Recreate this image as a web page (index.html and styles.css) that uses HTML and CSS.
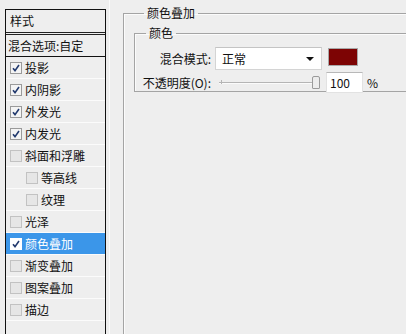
FILE: index.html
```html
<!DOCTYPE html>
<html lang="zh-CN">
    <head>
        <meta charset="UTF-8">
        <title>图层样式</title>
        <link rel="stylesheet" href="styles.css">
    </head>
    <body>
        <div class="dialog">
            <div class="styles-list">
                <div class="list-head">样式</div>
                <div class="list-blend">混合选项:自定</div>
                <div class="list-row"><span class="box checked"></span>投影</div>
                <div class="list-row"><span class="box checked"></span>内阴影</div>
                <div class="list-row"><span class="box checked"></span>外发光</div>
                <div class="list-row"><span class="box checked"></span>内发光</div>
                <div class="list-row"><span class="box"></span>斜面和浮雕</div>
                <div class="list-row sub"><span class="box"></span>等高线</div>
                <div class="list-row sub"><span class="box"></span>纹理</div>
                <div class="list-row"><span class="box"></span>光泽</div>
                <div class="list-row active"><span class="box checked"></span>颜色叠加</div>
                <div class="list-row"><span class="box"></span>渐变叠加</div>
                <div class="list-row"><span class="box"></span>图案叠加</div>
                <div class="list-row"><span class="box"></span>描边</div>
                <div class="list-row"></div>
            </div>

            <div class="settings">
                <fieldset class="group outer">
                    <legend>颜色叠加</legend>
                    <fieldset class="group inner">
                        <legend>颜色</legend>
                        <div class="form">
                            <label>混合模式:</label>
                            <div class="line">
                                <div class="select">正常<span class="arrow"></span></div>
                                <div class="swatch"></div>
                            </div>
                            <label>不透明度(<u>O</u>):</label>
                            <div class="line">
                                <div class="slider"><span class="tick"></span><span class="thumb"></span></div>
                                <div class="number">100</div>
                                <span class="unit">%</span>
                            </div>
                        </div>
                    </fieldset>
                </fieldset>
            </div>
        </div>
    </body>
</html>
```

FILE: styles.css
```css
html, body {
    margin: 0;
    padding: 0;
    height: 100%;
    overflow: hidden;
}

body {
    background-color: #eeeeee;
    font-family: "Noto Sans CJK SC", "Microsoft YaHei", sans-serif;
    font-size: 12px;
    color: #111;
}

.dialog {
    display: flex;
    align-items: flex-start;
    white-space: nowrap;
}

.styles-list {
    flex-shrink: 0;
    margin: 9px 0 0 5px;
    width: 99px;
    height: 340px;
    border: 1px solid #111;
    border-bottom: none;
    background-color: #eeeeee;
}

.list-head {
    height: 22px;
    line-height: 22px;
    padding-left: 4px;
    border-bottom: 3px double #222;
}

.list-blend {
    height: 21px;
    line-height: 21px;
    padding-left: 2px;
    border-bottom: 1px solid #111;
}

.list-row {
    display: flex;
    align-items: center;
    height: 21px;
    padding-left: 4px;
    border-bottom: 1px solid #fbfbfb;
}

.list-row.sub {
    padding-left: 20px;
}

.list-row.active {
    background-color: #3b96e9;
    color: #fff;
}

.box {
    width: 10px;
    height: 10px;
    margin-right: 3px;
    border: 1px solid #c2c2c2;
    background-color: #e6e6e6;
    flex-shrink: 0;
}

.box.checked {
    border-color: #9a9a9a;
    background-color: #f4f4f4;
    background-image: url("data:image/svg+xml,%3Csvg xmlns='http://www.w3.org/2000/svg' width='10' height='10'%3E%3Cpath d='M2 5.2 L4 7.6 L8 2' fill='none' stroke='%23223a6e' stroke-width='1.6'/%3E%3C/svg%3E");
}

.active .box.checked {
    background-color: #fff;
    border-color: #fff;
}

.settings {
    flex-shrink: 0;
    margin-left: 3px;
    padding-left: 13px;
    height: 340px;
    border-left: 1px solid #fbfbfb;
}

.group {
    margin: 0;
    border: 1px solid #a4a4a4;
    box-shadow: inset 1px 1px 0 #fbfbfb;
}

.group legend {
    padding: 0 3px;
    line-height: 14px;
}

.outer {
    margin-top: 6px;
    width: 320px;
    height: 340px;
    padding: 6px 0 0 10px;
    border-right: none;
    border-bottom: none;
}

.outer > legend {
    margin-left: 10px;
}

.inner {
    height: 57px;
    padding: 7px 0 0 0;
    border-right: none;
}

.inner > legend {
    margin-left: 11px;
}

.form {
    display: grid;
    grid-template-columns: 76px auto;
    column-gap: 4px;
    row-gap: 2px;
    align-items: center;
}

.form label {
    text-align: right;
}

.form u {
    text-decoration: none;
}

.line {
    display: flex;
    align-items: center;
}

.select {
    position: relative;
    width: 99px;
    height: 21px;
    line-height: 21px;
    padding-left: 6px;
    background-color: #fff;
    border: 1px solid #d4d4d4;
    border-top-color: #c4c4c4;
}

.arrow {
    position: absolute;
    right: 7px;
    top: 9px;
    border-left: 4px solid transparent;
    border-right: 4px solid transparent;
    border-top: 4px solid #111;
}

.swatch {
    width: 28px;
    height: 16px;
    margin-left: 6px;
    margin-bottom: 3px;
    background-color: #7d0404;
    border: 1px solid #a8a8a8;
}

.slider {
    position: relative;
    width: 102px;
    height: 20px;
    margin-left: 3px;
}

.slider::before {
    content: "";
    position: absolute;
    left: 1px;
    right: 4px;
    top: 9px;
    height: 1px;
    background-color: #b5b5b5;
    border-bottom: 1px solid #fbfbfb;
}

.tick {
    position: absolute;
    left: 3px;
    top: 7px;
    width: 1px;
    height: 4px;
    background-color: #b5b5b5;
}

.thumb {
    position: absolute;
    right: 0;
    top: 3px;
    width: 6px;
    height: 11px;
    border: 1px solid #9a9a9a;
    border-radius: 2px 2px 1px 1px;
    background-color: #ececec;
}

.number {
    width: 32px;
    height: 19px;
    line-height: 19px;
    margin-left: 6px;
    padding-left: 3px;
    background-color: #fff;
    border: 1px solid #e2e2e2;
    border-top-color: #b8b8b8;
}

.unit {
    margin-left: 4px;
}
```
